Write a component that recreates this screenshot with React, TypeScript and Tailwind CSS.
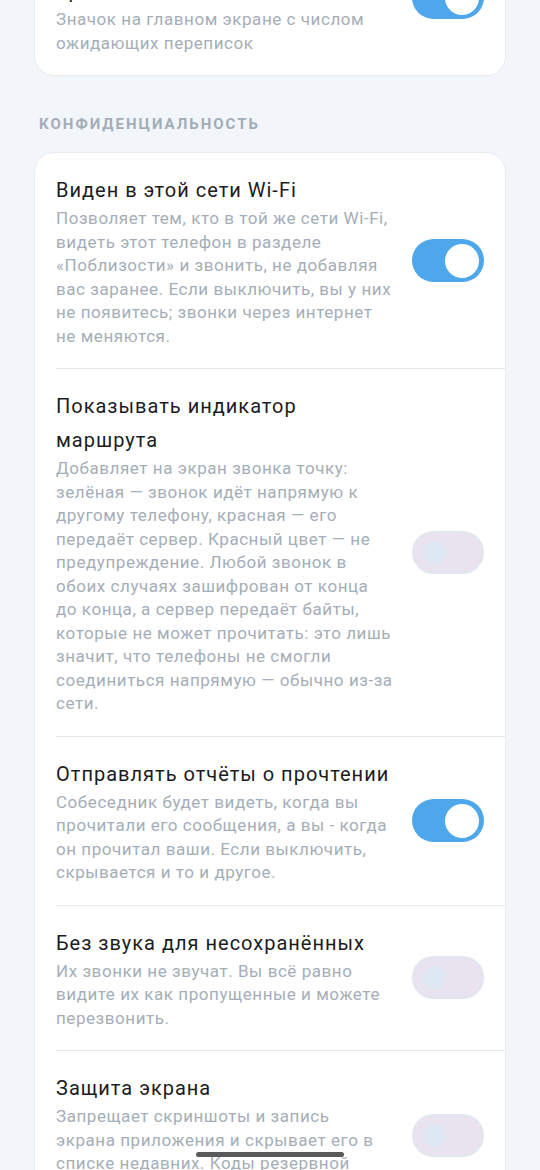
import React from 'react';

type Row = {
  title: string;
  desc: string;
  on: boolean;
};

const topRow: Row = {
  title: 'Показывать счётчик на значке приложения',
  desc: 'Значок на главном экране с числом ожидающих переписок',
  on: true,
};

const privacyRows: Row[] = [
  {
    title: 'Виден в этой сети Wi-Fi',
    desc: 'Позволяет тем, кто в той же сети Wi-Fi, видеть этот телефон в разделе «Поблизости» и звонить, не добавляя вас заранее. Если выключить, вы у них не появитесь; звонки через интернет не меняются.',
    on: true,
  },
  {
    title: 'Показывать индикатор маршрута',
    desc: 'Добавляет на экран звонка точку: зелёная — звонок идёт напрямую к другому телефону, красная — его передаёт сервер. Красный цвет — не предупреждение. Любой звонок в обоих случаях зашифрован от конца до конца, а сервер передаёт байты, которые не может прочитать: это лишь значит, что телефоны не смогли соединиться напрямую — обычно из-за сети.',
    on: false,
  },
  {
    title: 'Отправлять отчёты о прочтении',
    desc: 'Собеседник будет видеть, когда вы прочитали его сообщения, а вы - когда он прочитал ваши. Если выключить, скрывается и то и другое.',
    on: true,
  },
  {
    title: 'Без звука для несохранённых',
    desc: 'Их звонки не звучат. Вы всё равно видите их как пропущенные и можете перезвонить.',
    on: false,
  },
  {
    title: 'Защита экрана',
    desc: 'Запрещает скриншоты и запись экрана приложения и скрывает его в списке недавних. Коды резервной копии и ключи остаются скрытыми.',
    on: false,
  },
];

function Toggle({ on }: { on: boolean }) {
  if (on) {
    return (
      <div className="w-[72px] h-[43px] rounded-full bg-[#4ea7ea] flex items-center justify-end pr-[5px] shrink-0">
        <div className="w-[34px] h-[34px] rounded-full bg-white" />
      </div>
    );
  }
  return (
    <div className="w-[72px] h-[43px] rounded-full bg-[#e8e3ee] border-2 border-[#e2e6ef] flex items-center pl-[9px] shrink-0">
      <div className="w-[23px] h-[23px] rounded-full bg-[#dde8f3]" />
    </div>
  );
}

function SettingRow({ row, first }: { row: Row; first?: boolean }) {
  return (
    <div
      className={`ml-[21px] pr-[21px] py-5 flex items-center justify-between ${
        first ? '' : 'border-t border-[#e4eaf0]'
      }`}
    >
      <div className="w-[337px]">
        <div className="text-[20px] leading-[34px] text-[#1b1c1e] tracking-[1px]">{row.title}</div>
        <div className="text-[17px] leading-[23.5px] text-[#a5aeb8] tracking-[0.55px]">{row.desc}</div>
      </div>
      <Toggle on={row.on} />
    </div>
  );
}

export default function App() {
  return (
    <div className="relative h-[1170px] overflow-hidden bg-[#f2f6fa] font-['Roboto',sans-serif]">
      <div className="px-[34px] -mt-[81px]">
        {/* Notifications card (scrolled past) */}
        <div className="bg-white rounded-[20px] border border-[#e6ecf2]">
          <SettingRow row={topRow} first />
        </div>

        <div className="pl-[5px] pt-[38px] pb-[18px] text-[15px] leading-5 font-bold tracking-[2px] text-[#a3adb8] uppercase">
          Конфиденциальность
        </div>

        {/* Privacy card */}
        <div className="bg-white rounded-[20px] border border-[#e6ecf2]">
          {privacyRows.map((row, i) => (
            <SettingRow key={row.title} row={row} first={i === 0} />
          ))}
        </div>
      </div>

      {/* gesture bar */}
      <div className="absolute bottom-[13px] left-1/2 -translate-x-1/2 w-[148px] h-[5px] rounded-full bg-[#5a5a5a]" />
    </div>
  );
}
